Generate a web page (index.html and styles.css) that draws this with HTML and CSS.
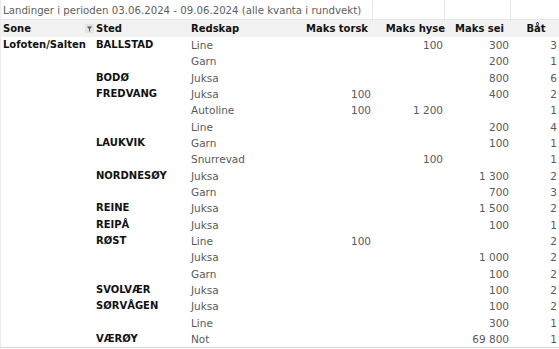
FILE: index.html
```html
<!DOCTYPE html>
<html lang="no">
<head>
<meta charset="utf-8">
<link rel="stylesheet" href="styles.css">
</head>
<body>
<div class="sheet">
  <div class="row title-row">
    <div class="title">Landinger i perioden 03.06.2024 - 09.06.2024 (alle kvanta i rundvekt)</div>
    <div class="tcell"></div>
    <div class="tcell"></div>
    <div class="tcell last"></div>
  </div>
  <div class="row head">
    <div class="c sone">Sone<svg class="filter" width="9" height="9" viewBox="0 0 9 9"><rect width="9" height="9" fill="#e4e4e4"/><path d="M2 2.5h5L5 5v2.5H4V5z" fill="#5a5a5a"/></svg></div>
    <div class="c">Sted</div>
    <div class="c">Redskap</div>
    <div class="c num h-torsk">Maks torsk</div>
    <div class="c num h-hyse">Maks hyse</div>
    <div class="c num h-sei">Maks sei</div>
    <div class="c h-bat">Båt</div>
  </div>
  <div class="body">
    <div class="row"><div class="c zone">Lofoten/Salten</div><div class="c sted">BALLSTAD</div><div class="c">Line</div><div class="c num"></div><div class="c num">100</div><div class="c num">300</div><div class="c num">3</div></div>
    <div class="row"><div class="c"></div><div class="c sted"></div><div class="c">Garn</div><div class="c num"></div><div class="c num"></div><div class="c num">200</div><div class="c num">1</div></div>
    <div class="row"><div class="c"></div><div class="c sted">BODØ</div><div class="c">Juksa</div><div class="c num"></div><div class="c num"></div><div class="c num">800</div><div class="c num">6</div></div>
    <div class="row"><div class="c"></div><div class="c sted">FREDVANG</div><div class="c">Juksa</div><div class="c num">100</div><div class="c num"></div><div class="c num">400</div><div class="c num">2</div></div>
    <div class="row"><div class="c"></div><div class="c sted"></div><div class="c">Autoline</div><div class="c num">100</div><div class="c num">1 200</div><div class="c num"></div><div class="c num">1</div></div>
    <div class="row"><div class="c"></div><div class="c sted"></div><div class="c">Line</div><div class="c num"></div><div class="c num"></div><div class="c num">200</div><div class="c num">4</div></div>
    <div class="row"><div class="c"></div><div class="c sted">LAUKVIK</div><div class="c">Garn</div><div class="c num"></div><div class="c num"></div><div class="c num">100</div><div class="c num">1</div></div>
    <div class="row"><div class="c"></div><div class="c sted"></div><div class="c">Snurrevad</div><div class="c num"></div><div class="c num">100</div><div class="c num"></div><div class="c num">1</div></div>
    <div class="row"><div class="c"></div><div class="c sted">NORDNESØY</div><div class="c">Juksa</div><div class="c num"></div><div class="c num"></div><div class="c num">1 300</div><div class="c num">2</div></div>
    <div class="row"><div class="c"></div><div class="c sted"></div><div class="c">Garn</div><div class="c num"></div><div class="c num"></div><div class="c num">700</div><div class="c num">3</div></div>
    <div class="row"><div class="c"></div><div class="c sted">REINE</div><div class="c">Juksa</div><div class="c num"></div><div class="c num"></div><div class="c num">1 500</div><div class="c num">2</div></div>
    <div class="row"><div class="c"></div><div class="c sted">REIPÅ</div><div class="c">Juksa</div><div class="c num"></div><div class="c num"></div><div class="c num">100</div><div class="c num">1</div></div>
    <div class="row"><div class="c"></div><div class="c sted">RØST</div><div class="c">Line</div><div class="c num">100</div><div class="c num"></div><div class="c num"></div><div class="c num">2</div></div>
    <div class="row"><div class="c"></div><div class="c sted"></div><div class="c">Juksa</div><div class="c num"></div><div class="c num"></div><div class="c num">1 000</div><div class="c num">2</div></div>
    <div class="row"><div class="c"></div><div class="c sted"></div><div class="c">Garn</div><div class="c num"></div><div class="c num"></div><div class="c num">100</div><div class="c num">2</div></div>
    <div class="row"><div class="c"></div><div class="c sted">SVOLVÆR</div><div class="c">Juksa</div><div class="c num"></div><div class="c num"></div><div class="c num">100</div><div class="c num">2</div></div>
    <div class="row"><div class="c"></div><div class="c sted">SØRVÅGEN</div><div class="c">Juksa</div><div class="c num"></div><div class="c num"></div><div class="c num">100</div><div class="c num">2</div></div>
    <div class="row"><div class="c"></div><div class="c sted"></div><div class="c">Line</div><div class="c num"></div><div class="c num"></div><div class="c num">300</div><div class="c num">1</div></div>
    <div class="row"><div class="c"></div><div class="c sted">VÆRØY</div><div class="c">Not</div><div class="c num"></div><div class="c num"></div><div class="c num">69 800</div><div class="c num">1</div></div>
  </div>
</div>
</body>
</html>
```

FILE: styles.css
```css
html, body {
  margin: 0;
  padding: 0;
  background: #fff;
}
body {
  font-family: "DejaVu Sans", sans-serif;
  font-size: 10.5px;
  color: #5a5a5a;
}
.sheet {
  width: 559px;
  height: 349px;
  overflow: hidden;
  border-left: 1px solid #ececec;
  box-sizing: border-box;
}
.row {
  display: grid;
  grid-template-columns: 93px 95px 101px 83px 72px 66px 48px;
  height: 16.33px;
  line-height: 16.33px;
  white-space: nowrap;
}
.title-row {
  grid-template-columns: 372px 72px 66px 48px;
  height: 20px;
  line-height: 22px;
  border-bottom: 1px solid #e6e6e6;
  box-sizing: border-box;
}
.title {
  padding-left: 2px;
  color: #606060;
  font-size: 10.2px;
  border-right: 1px solid #e6e6e6;
}
.tcell {
  border-right: 1px solid #e6e6e6;
}
.tcell.last {
  border-right: none;
}
.head {
  height: 17px;
  line-height: 17px;
  background: #f2f2f2;
  color: #111;
  font-weight: bold;
  font-size: 10px;
}
.c {
  padding-left: 2px;
  overflow: visible;
}
.sone {
  display: flex;
  align-items: center;
  justify-content: space-between;
  padding-right: 0;
}
.filter {
  display: block;
}
.num {
  text-align: right;
  padding-right: 2px;
}
.h-torsk { padding-right: 5px; }
.h-hyse { padding-right: 0; }
.h-sei { padding-right: 7px; }
.h-bat { text-align: center; }
.body {
  border-bottom: 1px solid #d6d6d6;
}
.zone, .sted {
  color: #111;
  font-weight: bold;
  font-size: 10px;
}
```
